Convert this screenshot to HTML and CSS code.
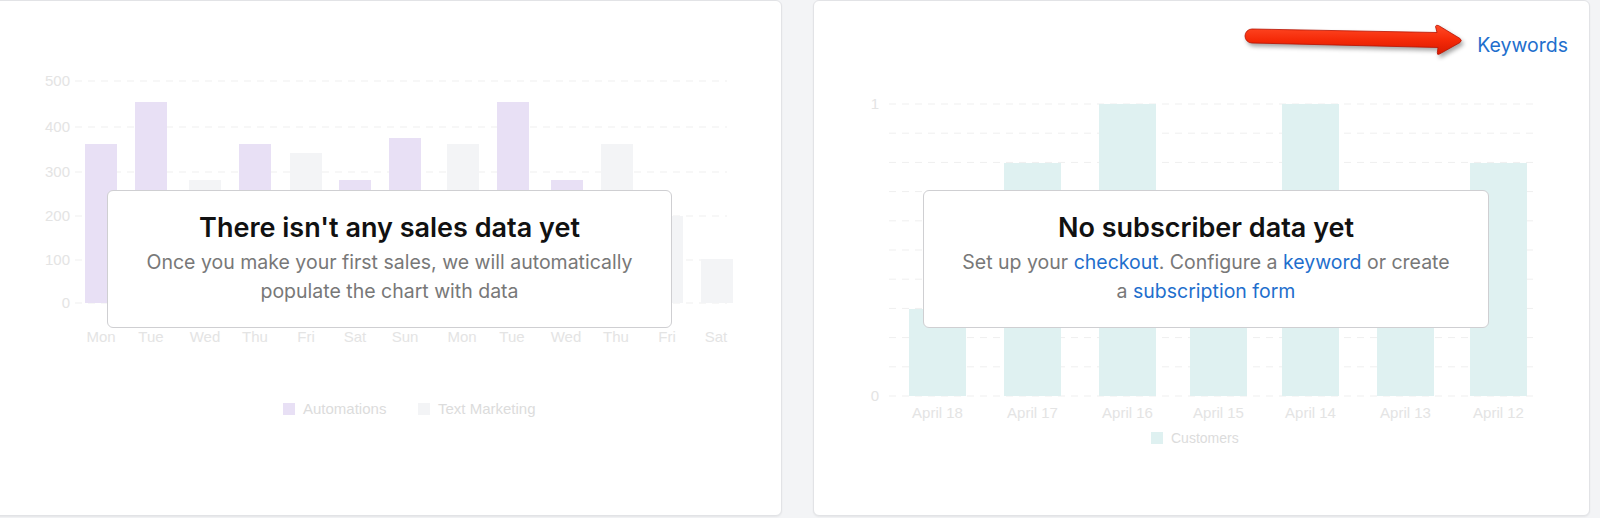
FILE: index.html
```html
<!DOCTYPE html>
<html>
<head>
<meta charset="utf-8">
<link rel="stylesheet" href="styles.css">
</head>
<body>
<div class="page">
  <section class="panel panel-left">
    <svg class="chart" width="789" height="514" viewBox="-7 1 789 514">
      <g class="grid">
        <line x1="75" y1="81" x2="727" y2="81"/>
        <line x1="75" y1="127" x2="727" y2="127"/>
        <line x1="75" y1="172" x2="727" y2="172"/>
        <line x1="75" y1="216" x2="727" y2="216"/>
        <line x1="75" y1="260" x2="727" y2="260"/>
        <line x1="75" y1="303" x2="727" y2="303"/>
      </g>
      <g class="axis-y">
        <text x="70" y="86">500</text>
        <text x="70" y="132">400</text>
        <text x="70" y="177">300</text>
        <text x="70" y="221">200</text>
        <text x="70" y="265">100</text>
        <text x="70" y="308">0</text>
      </g>
      <g>
        <rect class="bar-purple" x="85" y="144" width="32" height="159"/>
        <rect class="bar-purple" x="135" y="102" width="32" height="201"/>
        <rect class="bar-gray" x="189" y="180" width="32" height="123"/>
        <rect class="bar-purple" x="239" y="144" width="32" height="159"/>
        <rect class="bar-gray" x="290" y="153" width="32" height="150"/>
        <rect class="bar-purple" x="339" y="180" width="32" height="123"/>
        <rect class="bar-purple" x="389" y="138" width="32" height="165"/>
        <rect class="bar-gray" x="447" y="144" width="32" height="159"/>
        <rect class="bar-purple" x="497" y="102" width="32" height="201"/>
        <rect class="bar-purple" x="551" y="180" width="32" height="123"/>
        <rect class="bar-gray" x="601" y="144" width="32" height="159"/>
        <rect class="bar-gray" x="651" y="216" width="32" height="87"/>
        <rect class="bar-gray" x="701" y="259" width="32" height="44"/>
      </g>
      <g class="axis-x">
        <text x="101" y="342">Mon</text>
        <text x="151" y="342">Tue</text>
        <text x="205" y="342">Wed</text>
        <text x="255" y="342">Thu</text>
        <text x="306" y="342">Fri</text>
        <text x="355" y="342">Sat</text>
        <text x="405" y="342">Sun</text>
        <text x="462" y="342">Mon</text>
        <text x="512" y="342">Tue</text>
        <text x="566" y="342">Wed</text>
        <text x="616" y="342">Thu</text>
        <text x="667" y="342">Fri</text>
        <text x="716" y="342">Sat</text>
      </g>
      <g class="legend legend-left">
        <rect class="bar-purple" x="283" y="403" width="12" height="12"/>
        <text x="303" y="414">Automations</text>
        <rect class="bar-gray" x="418" y="403" width="12" height="12"/>
        <text x="438" y="414">Text Marketing</text>
      </g>
    </svg>
    <div class="empty-card card-left">
      <h2 class="empty-title">There isn't any sales data yet</h2>
      <p class="empty-text">Once you make your first sales, we will automatically populate the chart with data</p>
    </div>
  </section>

  <section class="panel panel-right">
    <header class="panel-head">
      <a class="link head-link" href="#">Keywords</a>
    </header>
    <svg class="chart" width="775" height="444" viewBox="814 71 775 444">
      <g class="grid">
        <line x1="889" y1="104" x2="1538" y2="104"/>
        <line x1="889" y1="133.2" x2="1538" y2="133.2"/>
        <line x1="889" y1="162.4" x2="1538" y2="162.4"/>
        <line x1="889" y1="191.6" x2="1538" y2="191.6"/>
        <line x1="889" y1="220.8" x2="1538" y2="220.8"/>
        <line x1="889" y1="250" x2="1538" y2="250"/>
        <line x1="889" y1="279.2" x2="1538" y2="279.2"/>
        <line x1="889" y1="308.4" x2="1538" y2="308.4"/>
        <line x1="889" y1="337.6" x2="1538" y2="337.6"/>
        <line x1="889" y1="366.8" x2="1538" y2="366.8"/>
        <line x1="889" y1="396" x2="1538" y2="396"/>
      </g>
      <g class="axis-y">
        <text x="879" y="109">1</text>
        <text x="879" y="401">0</text>
      </g>
      <g>
        <rect class="bar-teal" x="909" y="309" width="57" height="87"/>
        <rect class="bar-teal" x="1004" y="163" width="57" height="233"/>
        <rect class="bar-teal" x="1099" y="104" width="57" height="292"/>
        <rect class="bar-teal" x="1190" y="250" width="57" height="146"/>
        <rect class="bar-teal" x="1282" y="104" width="57" height="292"/>
        <rect class="bar-teal" x="1377" y="250" width="57" height="146"/>
        <rect class="bar-teal" x="1470" y="163" width="57" height="233"/>
      </g>
      <g class="axis-x">
        <text x="937.5" y="418">April 18</text>
        <text x="1032.5" y="418">April 17</text>
        <text x="1127.5" y="418">April 16</text>
        <text x="1218.5" y="418">April 15</text>
        <text x="1310.5" y="418">April 14</text>
        <text x="1405.5" y="418">April 13</text>
        <text x="1498.5" y="418">April 12</text>
      </g>
      <g class="legend">
        <rect class="bar-teal" x="1151" y="432" width="12" height="12"/>
        <text x="1171" y="443">Customers</text>
      </g>
    </svg>
    <div class="empty-card card-right">
      <h2 class="empty-title">No subscriber data yet</h2>
      <p class="empty-text">Set up your <a class="link" href="#">checkout</a>. Configure a <a class="link" href="#">keyword</a> or create a <a class="link" href="#">subscription form</a></p>
    </div>
    <svg class="arrow" width="236" height="46" viewBox="0 0 236 46">
      <defs>
        <linearGradient id="arrowFill" x1="0" y1="0" x2="0" y2="1">
          <stop offset="0" stop-color="#ff4a26"/>
          <stop offset="0.5" stop-color="#f52a08"/>
          <stop offset="1" stop-color="#d81a00"/>
        </linearGradient>
      </defs>
      <path d="M 12 9 L 197 12.5 L 195.5 6.5 Q 196 4.5 198.5 5.5 L 220 18.5 Q 222.5 20.5 220 22.5 L 199.5 34 Q 197 35.3 197.3 32.8 L 198 27.5 L 12 23 A 7 7 0 0 1 12 9 Z" fill="url(#arrowFill)" stroke="#b81200" stroke-width="0.8"/>
    </svg>
  </section>
</div>
</body>
</html>
```

FILE: styles.css
```css
html, body {
  margin: 0;
  padding: 0;
}

body {
  background: #f3f4f6;
  font-family: Inter, "Noto Sans", "Liberation Sans", sans-serif;
  width: 1600px;
  height: 518px;
  overflow: hidden;
}

.page {
  display: flex;
  gap: 31px;
  align-items: flex-start;
}

.panel {
  position: relative;
  box-sizing: border-box;
  height: 516px;
  background: #ffffff;
  border: 1px solid #e2e3e6;
  border-radius: 6px;
  box-shadow: 0 1px 2px rgba(0, 0, 0, 0.06);
  display: flex;
  flex-direction: column;
}

.panel-left {
  width: 790px;
  margin-left: -8px;
}

.panel-right {
  width: 777px;
}

.chart {
  display: block;
  flex: none;
}

.grid line {
  stroke: #efefef;
  stroke-width: 1;
  stroke-dasharray: 7 6;
}

.axis-y text {
  font-family: "Liberation Sans", Arial, sans-serif;
  font-size: 15px;
  fill: #e4e4e4;
  text-anchor: end;
}

.axis-x text {
  font-family: "Liberation Sans", Arial, sans-serif;
  font-size: 15px;
  fill: #e4e4e4;
  text-anchor: middle;
}

.legend text {
  font-family: "Liberation Sans", Arial, sans-serif;
  font-size: 14px;
  fill: #dcdcdc;
}

.legend-left text {
  font-size: 15px;
}

.bar-purple {
  fill: #e8e0f5;
}

.bar-gray {
  fill: #f3f4f6;
}

.bar-teal {
  fill: #dff1f1;
}

.panel-head {
  display: flex;
  justify-content: flex-end;
  height: 70px;
  box-sizing: border-box;
  padding: 31px 21px 0 0;
}

.link {
  color: #1f6fcd;
  text-decoration: none;
}

.head-link {
  font-size: 19.5px;
  line-height: 26px;
}

.empty-card {
  position: absolute;
  top: 189px;
  box-sizing: border-box;
  height: 138px;
  background: #ffffff;
  border: 1px solid #cfcfd2;
  border-radius: 6px;
  padding: 19px 32px 0;
  text-align: center;
}

.card-left {
  left: 114px;
  width: 565px;
}

.card-right {
  left: 109px;
  width: 566px;
}

.empty-title {
  margin: 0;
  font-size: 27px;
  line-height: 36px;
  font-weight: 600;
  color: #111111;
}

.empty-text {
  margin: 2px 0 0;
  font-size: 19.5px;
  line-height: 29px;
  color: #787878;
}

.arrow {
  position: absolute;
  left: 426px;
  top: 19px;
  overflow: visible;
  filter: drop-shadow(2px 3px 2px rgba(0, 0, 0, 0.35));
}
```
